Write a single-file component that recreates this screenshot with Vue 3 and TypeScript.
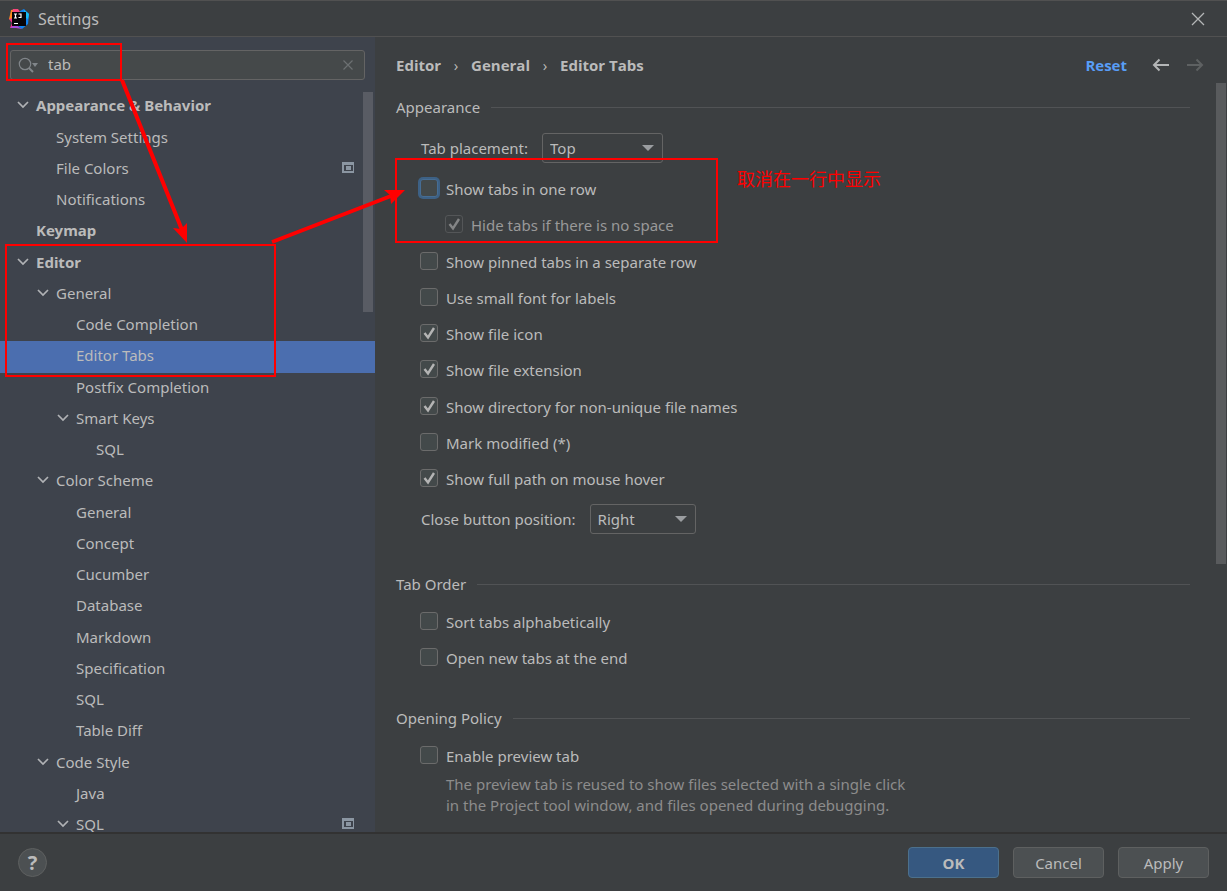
<script setup lang="ts">
import { ref } from 'vue'

interface TreeItem {
  label: string
  level: number
  open?: boolean
  bold?: boolean
  selected?: boolean
  project?: boolean
}

interface Option {
  id: string
  label: string
  checked: boolean
  focused?: boolean
  nested?: boolean
}

const query = ref('tab')

const tree: TreeItem[] = [
  { label: 'Appearance & Behavior', level: 0, open: true, bold: true },
  { label: 'System Settings', level: 1 },
  { label: 'File Colors', level: 1, project: true },
  { label: 'Notifications', level: 1 },
  { label: 'Keymap', level: 0, bold: true },
  { label: 'Editor', level: 0, open: true, bold: true },
  { label: 'General', level: 1, open: true },
  { label: 'Code Completion', level: 2 },
  { label: 'Editor Tabs', level: 2, selected: true },
  { label: 'Postfix Completion', level: 2 },
  { label: 'Smart Keys', level: 2, open: true },
  { label: 'SQL', level: 3 },
  { label: 'Color Scheme', level: 1, open: true },
  { label: 'General', level: 2 },
  { label: 'Concept', level: 2 },
  { label: 'Cucumber', level: 2 },
  { label: 'Database', level: 2 },
  { label: 'Markdown', level: 2 },
  { label: 'Specification', level: 2 },
  { label: 'SQL', level: 2 },
  { label: 'Table Diff', level: 2 },
  { label: 'Code Style', level: 1, open: true },
  { label: 'Java', level: 2 },
  { label: 'SQL', level: 2, open: true, project: true },
]

const appearance = ref<Option[]>([
  { id: 'one-row', label: 'Show tabs in one row', checked: false, focused: true },
  { id: 'hide', label: 'Hide tabs if there is no space', checked: true, nested: true },
  { id: 'pinned', label: 'Show pinned tabs in a separate row', checked: false },
  { id: 'small', label: 'Use small font for labels', checked: false },
  { id: 'icon', label: 'Show file icon', checked: true },
  { id: 'ext', label: 'Show file extension', checked: true },
  { id: 'dir', label: 'Show directory for non-unique file names', checked: true },
  { id: 'mod', label: 'Mark modified (*)', checked: false },
  { id: 'path', label: 'Show full path on mouse hover', checked: true },
])

const order = ref<Option[]>([
  { id: 'sort', label: 'Sort tabs alphabetically', checked: false },
  { id: 'end', label: 'Open new tabs at the end', checked: false },
])

const preview = ref(false)
</script>

<template>
  <div class="window">
    <header class="titlebar">
      <svg class="logo" width="20" height="20" viewBox="0 0 20 20" aria-hidden="true">
        <path d="M2 1 8 0 10 4 4 12 0 10 1 6Z" fill="#ff8b1f" />
        <path d="M4 0H9L12 4 7 9 3 5Z" fill="#f9467c" />
        <path d="M11 2 15 0 20 5 19 15 13 20 9 17Z" fill="#0f84f5" />
        <path d="M15 1 20 5 19 10 15 8Z" fill="#16bdf2" />
        <path d="M0 10 5 9 9 16 7 18 1 19 3 14Z" fill="#f0318c" />
        <path d="M1 19 7 15 10 18 13 20 7 19Z" fill="#a64bdc" />
        <rect x="3" y="3" width="14" height="14" fill="#080408" />
        <path d="M5 5H8M6.500 5V9M5 9H8M9.500 5H12V8.500H9.500M5 14.500H9" fill="none" stroke="#fff" stroke-width="1.200" />
      </svg>
      <h1>Settings</h1>
      <button class="icon-button close" type="button" aria-label="Close">
        <svg width="14" height="14" viewBox="0 0 14 14"><path d="M1 1 13 13M13 1 1 13" fill="none" stroke="#b4b6b7" stroke-width="1.300" /></svg>
      </button>
    </header>

    <div class="body">
      <aside class="sidebar">
        <div class="search">
          <svg width="22" height="16" viewBox="0 0 22 16" aria-hidden="true">
            <circle cx="7" cy="7" r="5.700" fill="none" stroke="#81868a" stroke-width="1.200" />
            <path d="m11 11 4 4" stroke="#81868a" stroke-width="2" />
            <path d="M14 6h6l-3 4Z" fill="#81868a" />
          </svg>
          <input v-model="query" type="text" aria-label="Search settings" />
          <button class="icon-button" type="button" aria-label="Clear search" @click="query = ''">
            <svg width="10" height="10" viewBox="0 0 10 10"><path d="M0.500 0.500 9.500 9.500M9.500 0.500 0.500 9.500" stroke="#6c7072" stroke-width="1.200" /></svg>
          </button>
        </div>
        <div class="tree-area">
          <ul class="tree">
            <li
              v-for="(item, i) in tree"
              :key="i"
              :class="['level-' + item.level, { bold: item.bold, selected: item.selected }]"
            >
              <span class="chevron">
                <svg v-if="item.open" width="12" height="8" viewBox="0 0 12 8"><path d="m1 1 5 5 5-5" fill="none" stroke="#b0b2b5" stroke-width="1.700" /></svg>
              </span>
              <span class="name">{{ item.label }}</span>
              <svg v-if="item.project" class="project" width="12" height="11" viewBox="0 0 12 11">
                <path fill-rule="evenodd" d="M0 0H12V11H0ZM2 3V9H11V3Z" fill="#8b96a2" />
                <rect x="4" y="4" width="5" height="4" fill="#8b96a2" />
              </svg>
            </li>
          </ul>
          <div class="track"><div class="thumb side-thumb"></div></div>
        </div>
      </aside>

      <main class="main">
        <div class="topline">
          <nav aria-label="Breadcrumb">
            <span>Editor</span><span class="sep">›</span><span>General</span><span class="sep">›</span><span>Editor Tabs</span>
          </nav>
          <a class="reset" href="#">Reset</a>
          <button class="icon-button" type="button" aria-label="Back">
            <svg width="18" height="14" viewBox="0 0 18 14"><path d="M17 7H2M7.500 1.500 2 7l5.500 5.500" fill="none" stroke="#b4b6b7" stroke-width="2" /></svg>
          </button>
          <button class="icon-button forward" type="button" aria-label="Forward" disabled>
            <svg width="18" height="14" viewBox="0 0 18 14"><path d="M1 7h15M10.500 1.500 16 7l-5.500 5.500" fill="none" stroke="#5e6162" stroke-width="2" /></svg>
          </button>
        </div>

        <div class="scroll">
          <div class="page">
            <section>
              <h2>Appearance</h2>
              <div class="field">
                <label for="placement">Tab placement:</label>
                <span class="select wide">
                  <select id="placement"><option>Top</option><option>Bottom</option><option>Left</option><option>Right</option></select>
                </span>
              </div>
              <div class="options">
                <label v-for="o in appearance" :key="o.id" :class="['check', { nested: o.nested }]">
                  <input v-model="o.checked" type="checkbox" :disabled="o.nested" :class="{ focused: o.focused }" />
                  <span>{{ o.label }}</span>
                </label>
              </div>
              <div class="field last">
                <label for="close-pos">Close button position:</label>
                <span class="select">
                  <select id="close-pos"><option>Right</option><option>Left</option><option>None</option></select>
                </span>
              </div>
            </section>
            <section class="order">
              <h2>Tab Order</h2>
              <div class="options">
                <label v-for="o in order" :key="o.id" class="check">
                  <input v-model="o.checked" type="checkbox" /><span>{{ o.label }}</span>
                </label>
              </div>
            </section>
            <section>
              <h2>Opening Policy</h2>
              <div class="options">
                <label class="check"><input v-model="preview" type="checkbox" /><span>Enable preview tab</span></label>
              </div>
              <p class="hint">The preview tab is reused to show files selected with a single click<br />in the Project tool window, and files opened during debugging.</p>
            </section>
          </div>
          <div class="track"><div class="thumb main-thumb"></div></div>
        </div>
      </main>
    </div>

    <footer class="footer">
      <button class="help" type="button" aria-label="Help">?</button>
      <button class="btn primary" type="button">OK</button>
      <button class="btn" type="button">Cancel</button>
      <button class="btn" type="button">Apply</button>
    </footer>

    <svg class="marks" width="900" height="400" viewBox="0 0 900 400" aria-hidden="true">
      <g fill="none" stroke="#f00" stroke-width="2">
        <rect x="7" y="44" width="114" height="36" />
        <rect x="6" y="245" width="269" height="131" />
        <rect x="396" y="159" width="321" height="83" />
      </g>
      <path d="M122 80 182 230M272 242 391 196" stroke="#f00" stroke-width="4" />
      <path d="m187 243-14-15 8 1 6-6ZM405 190l-21 0 6 5 1 9Z" fill="#f00" />
    </svg>
    <p class="note" lang="zh-CN">取消在一行中显示</p>
  </div>
</template>

<style>
body {
  background: #3c3f41;
}
</style>

<style scoped>
* {
  box-sizing: border-box;
}
.window {
  position: relative;
  display: flex;
  flex-direction: column;
  height: 100vh;
  overflow: hidden;
  background: #3c3f41;
  color: #bbbbbb;
  font-family: "Noto Sans", "Noto Sans CJK SC", sans-serif;
  font-size: 15px;
}
h1, h2, p, ul {
  margin: 0;
  padding: 0;
  font-weight: 400;
}
h2, input, select, button {
  font-family: inherit;
  font-size: inherit;
  color: inherit;
}
h1 {
  font-size: 16px;
}
.titlebar {
  display: flex;
  align-items: center;
  gap: 9px;
  height: 37px;
  flex: none;
  padding: 0 22px 0 9px;
  border-top: 1px solid #515151;
  border-bottom: 1px solid #515151;
}
.icon-button {
  display: flex;
  padding: 0;
  border: 0;
  background: none;
}
.close {
  margin-left: auto;
}
.body {
  display: flex;
  flex: 1;
  min-height: 0;
}
.sidebar {
  display: flex;
  flex-direction: column;
  width: 375px;
  flex: none;
  background: #3e434c;
}
.search {
  display: flex;
  align-items: center;
  height: 30px;
  flex: none;
  margin: 13px 10px 11px;
  padding: 0 11px 0 7px;
  border: 1px solid #646464;
  border-radius: 3px;
  background: #45494a;
}
.search input {
  flex: 1;
  min-width: 0;
  padding: 0 0 2px 8px;
  border: 0;
  outline: 0;
  background: none;
}
.tree-area {
  display: flex;
  flex: 1;
  min-height: 0;
  position: relative;
}
.tree {
  flex: 1;
  overflow: hidden;
  list-style: none;
}
.tree li {
  display: flex;
  align-items: center;
  height: 31px;
  padding: 0 21px 4px 17px;
}
.tree li:nth-child(4n + 1) {
  height: 32px;
}
.tree .level-1 { padding-left: 37px; }
.tree .level-2 { padding-left: 57px; }
.tree .level-3 { padding-left: 77px; }
.tree .bold { font-weight: 700; }
.tree .selected { background: #4b6eaf; }
.chevron {
  display: flex;
  width: 19px;
}
.name {
  flex: 1;
}
.track {
  width: 11px;
  flex: none;
}
.tree-area .track {
  position: absolute;
  right: 1px;
  top: 1px;
}
.thumb {
  width: 10px;
}
.side-thumb {
  height: 220px;
  background: #595c64;
}
.main-thumb {
  height: 481px;
  background: #595b5d;
}
.main {
  display: flex;
  flex-direction: column;
  flex: 1;
  min-width: 0;
}
.topline {
  display: flex;
  align-items: center;
  height: 46px;
  flex: none;
  padding: 10px 23px 0 21px;
  font-family: "Open Sans", sans-serif;
  font-weight: 700;
}
.topline nav {
  display: flex;
  flex: 1;
}
.sep {
  width: 30px;
  text-align: center;
  font-weight: 400;
}
.reset {
  margin-right: 25px;
  color: #589df6;
  text-decoration: none;
}
.forward {
  margin-left: 16px;
}
.scroll {
  display: flex;
  flex: 1;
  min-height: 0;
}
.page {
  flex: 1;
  padding: 12px 26px 0 21px;
  overflow: hidden;
}
h2 {
  display: flex;
  align-items: center;
  gap: 11px;
  height: 24px;
}
h2::after {
  content: "";
  flex: 1;
  height: 1px;
  background: #515355;
}
.field {
  display: flex;
  align-items: center;
  gap: 14px;
  padding-left: 25px;
  margin-top: 14px;
}
.select {
  position: relative;
  width: 106px;
}
.select.wide {
  width: 121px;
}
.select::after {
  content: "";
  position: absolute;
  right: 9px;
  top: 12px;
  border: 6px solid transparent;
  border-top-color: #9a9da0;
  border-bottom: 0;
  pointer-events: none;
}
select {
  appearance: none;
  width: 100%;
  height: 30px;
  padding: 0 7px;
  border: 1px solid #646464;
  border-radius: 3px;
  background: none;
}
.options {
  padding-left: 24px;
  margin-top: 8px;
}
.check {
  display: flex;
  align-items: center;
  gap: 8px;
  height: 36px;
}
.check:nth-child(4n + 3) {
  height: 37px;
}
.nested {
  padding-left: 25px;
  color: #999999;
}
.check input {
  appearance: none;
  width: 18px;
  height: 18px;
  margin: 0 0 2px;
  border: 1px solid #6b6b6b;
  border-radius: 3px;
  background: #43494a;
}
.check input:checked {
  background: #43494a url("data:image/svg+xml,%3Csvg xmlns='http://www.w3.org/2000/svg' viewBox='0 0 16 16'%3E%3Cpath d='m3.500 8 3.500 4.500L13 3' fill='none' stroke='%23b4b4b4' stroke-width='2.400'/%3E%3C/svg%3E");
}
.check input:disabled {
  border-color: #646668;
  background-color: #3c3f41;
  opacity: 0.6;
}
.check input.focused {
  border-color: #466d94;
  box-shadow: 0 0 0 2px #3d6185;
}
.field.last {
  margin-top: 7px;
  margin-bottom: 38px;
}
.order {
  margin-bottom: 30px;
}
.hint {
  padding-left: 50px;
  color: #8c8c8c;
  line-height: 21px;
}
.footer {
  display: flex;
  align-items: center;
  gap: 14px;
  height: 59px;
  flex: none;
  padding: 0 18px;
  border-top: 2px solid #323232;
}
.btn {
  width: 91px;
  height: 31px;
  border: 1px solid #5e6060;
  border-radius: 4px;
  background: #4c5052;
}
.primary {
  border-color: #4c708c;
  background: #365880;
  font-weight: 700;
}
.help {
  width: 29px;
  height: 29px;
  margin-right: auto;
  padding: 0;
  border: 1px solid #5e6060;
  border-radius: 50%;
  background: #4c5052;
  font-size: 20px;
  font-weight: 700;
  line-height: 20px;
}
.marks {
  position: absolute;
  left: 0;
  top: 0;
  pointer-events: none;
}
.note {
  position: absolute;
  left: 737px;
  top: 165px;
  color: #ff0000;
  font-family: "Noto Sans CJK SC", sans-serif;
  font-size: 18px;
  line-height: 26px;
}
</style>
